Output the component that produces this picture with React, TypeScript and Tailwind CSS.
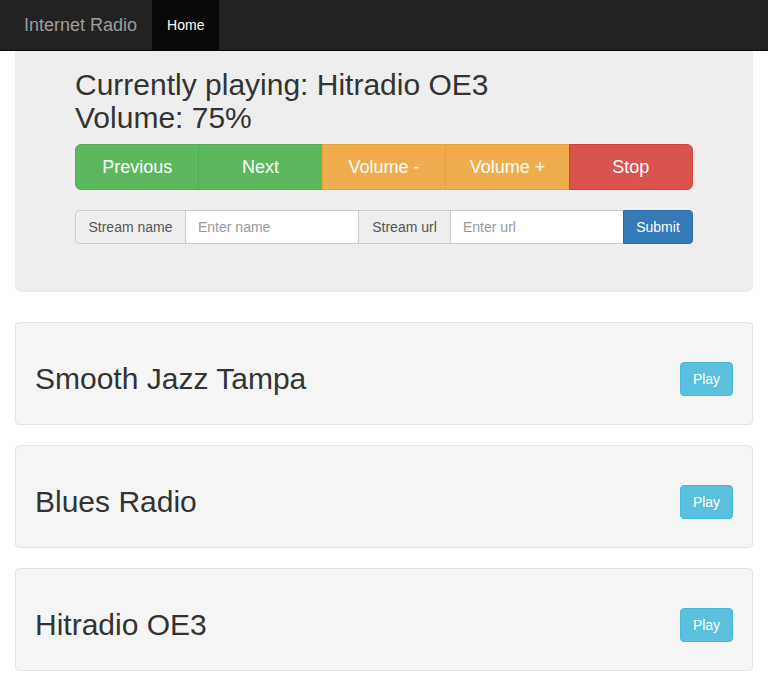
const stations = ['Smooth Jazz Tampa', 'Blues Radio', 'Hitradio OE3'];

const controls = [
  { label: 'Previous', className: 'bg-[#5cb85c] border-[#4cae4c] rounded-l-[6px]' },
  { label: 'Next', className: 'bg-[#5cb85c] border-[#4cae4c] -ml-px' },
  { label: 'Volume -', className: 'bg-[#f0ad4e] border-[#eea236] -ml-px' },
  { label: 'Volume +', className: 'bg-[#f0ad4e] border-[#eea236] -ml-px' },
  { label: 'Stop', className: 'bg-[#d9534f] border-[#d43f3a] -ml-px rounded-r-[6px]' },
];

export default function App() {
  return (
    <div className="min-h-[688px] bg-white font-['Liberation_Sans',Arial,sans-serif] text-[14px] text-[#333]">
      <nav className="flex h-[51px] items-stretch border-b border-[#080808] bg-[#222]">
        <span className="flex items-center pl-[24px] pr-[15px] text-[18px] text-[#9d9d9d]">Internet Radio</span>
        <span className="flex items-center bg-[#080808] px-[15px] text-white">Home</span>
      </nav>

      <div className="px-[15px]">
        <section className="rounded-b-[6px] bg-[#eee] px-[60px] pt-[17px] pb-[48px]">
          <h2 className="text-[30px] leading-[33px] font-normal">
            Currently playing: Hitradio OE3
            <br />
            Volume: 75%
          </h2>
          <div className="mt-[10px] flex">
            {controls.map((c) => (
              <button
                key={c.label}
                className={`h-[46px] flex-1 border text-[18px] text-white ${c.className}`}
              >
                {c.label}
              </button>
            ))}
          </div>
          <div className="mt-[20px] flex h-[34px]">
            <span className="flex w-[111px] items-center justify-center rounded-l-[4px] border border-[#ccc] bg-[#eee] text-[#555]">
              Stream name
            </span>
            <input
              placeholder="Enter name"
              className="-ml-px w-[174px] border border-[#ccc] bg-white px-[12px] text-[#555] outline-none placeholder:text-[#999]"
            />
            <span className="-ml-px flex w-[93px] items-center justify-center border border-[#ccc] bg-[#eee] text-[#555]">
              Stream url
            </span>
            <input
              placeholder="Enter url"
              className="-ml-px w-[174px] border border-[#ccc] bg-white px-[12px] text-[#555] outline-none placeholder:text-[#999]"
            />
            <button className="-ml-px flex-1 rounded-r-[4px] border border-[#2e6da4] bg-[#337ab7] text-white">
              Submit
            </button>
          </div>
        </section>

        <div className="mt-[30px] flex flex-col gap-[20px]">
          {stations.map((name) => (
            <div
              key={name}
              className="flex h-[103px] items-start justify-between rounded-[4px] border border-[#e3e3e3] bg-[#f5f5f5] px-[19px] pt-[39px]"
            >
              <h2 className="text-[30px] leading-[33px] font-normal">{name}</h2>
              <button className="h-[34px] w-[53px] rounded-[4px] border border-[#46b8da] bg-[#5bc0de] text-white">
                Play
              </button>
            </div>
          ))}
        </div>
      </div>
    </div>
  );
}
